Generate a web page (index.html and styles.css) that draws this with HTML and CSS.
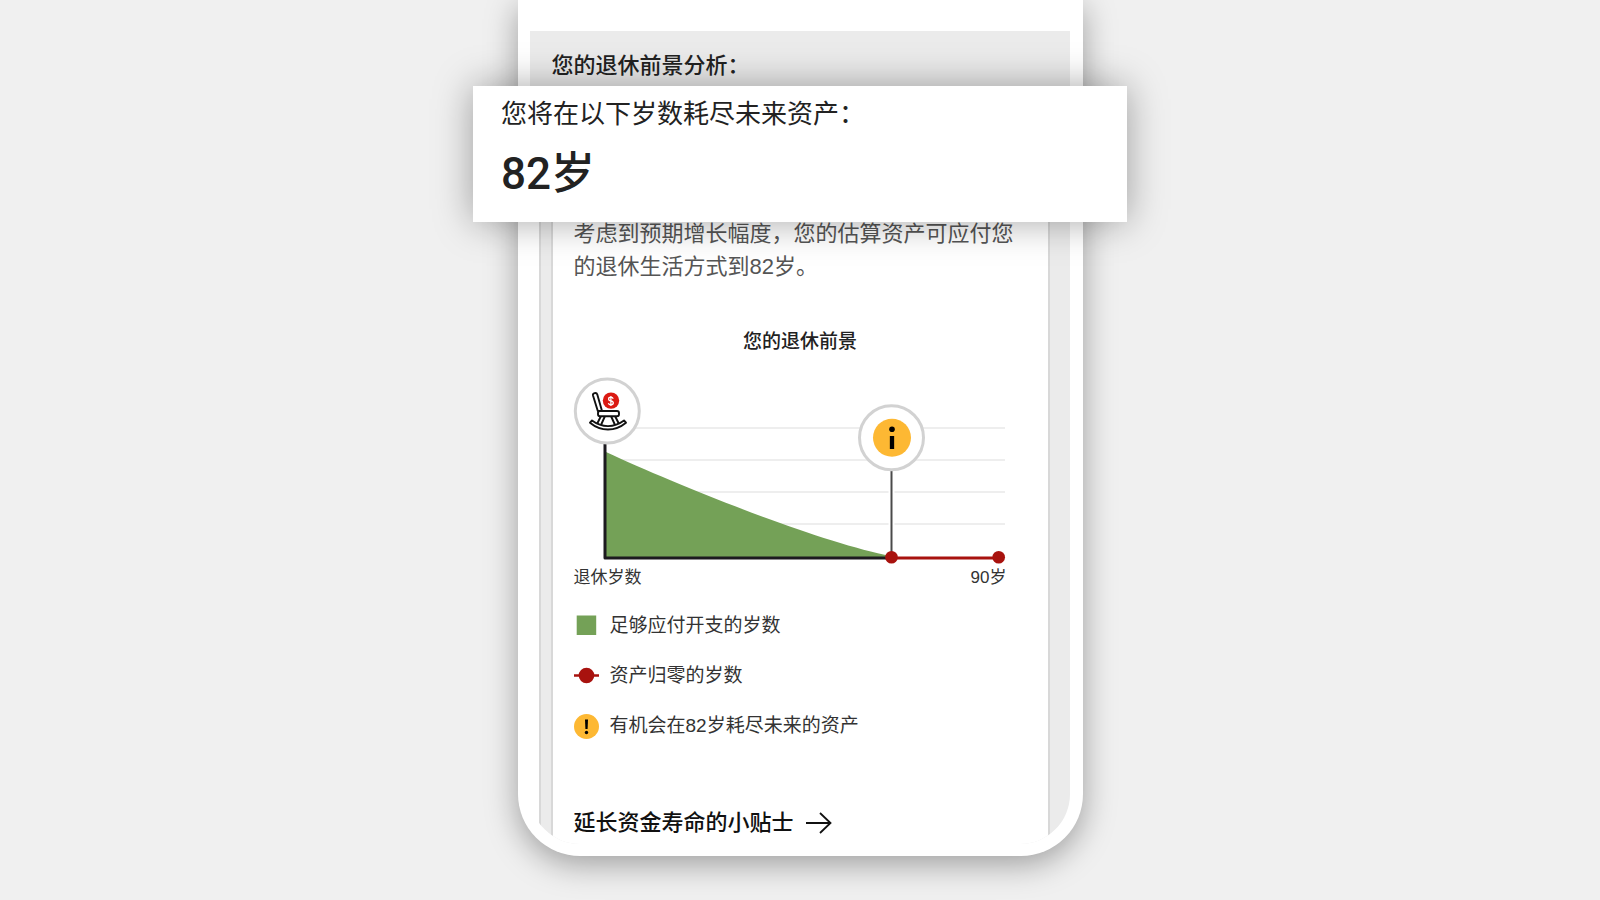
FILE: index.html
```
<!DOCTYPE html>
<html lang="zh-CN">
<head>
    <meta charset="UTF-8">
    <meta name="viewport" content="width=device-width, initial-scale=1.0">
    <title>您的退休前景</title>
    <link rel="stylesheet" href="styles.css">
</head>
<body>
    <main class="phone">
        <div class="screen">
            <h1 class="screen-title">您的退休前景分析：</h1>

            <div class="panel">
                <div class="card">
                    <p class="summary">考虑到预期增长幅度，您的估算资产可应付您的退休生活方式到82岁。</p>

                    <h2 class="chart-title">您的退休前景</h2>
                    <svg class="chart" viewBox="0 0 453 198" role="img" aria-label="您的退休前景">
                        <g stroke="#eeeeee" stroke-width="2">
                            <path d="M33 58H431M33 90H431M33 122H431M33 154H431"/>
                        </g>
                        <path d="M32 82C110 118 245 172 317 186V188H32Z" fill="#74a157"/>
                        <path d="M31 70V188H317" fill="none" stroke="#1c1a1f" stroke-width="3" stroke-linejoin="round"/>
                        <path d="M317.500 98V187" stroke="#fff" stroke-width="6"/>
                        <path d="M317.500 98V187" stroke="#4a4a4a" stroke-width="2"/>
                        <path d="M317 188H425" stroke="#a8120e" stroke-width="3"/>
                        <circle cx="317.500" cy="187.300" r="6.300" fill="#a8120e"/>
                        <circle cx="424.700" cy="187.300" r="6.300" fill="#a8120e"/>

                        <!-- rocking chair -->
                        <circle cx="33.300" cy="41" r="32" fill="#fff" stroke="#d2d2d2" stroke-width="3"/>
                        <g fill="#fff" stroke="#111" stroke-width="1.900" stroke-linejoin="round" stroke-linecap="round">
                            <path d="M27 46l-4 8M31 46l-4 9M37 46l4 9M41 46l4 8" fill="none"/>
                            <path d="M19 25.500c-.6-2.600 3.500-3.600 4.300-1L28 41h-4.200Z"/>
                            <rect x="24" y="41" width="21" height="5.200" rx="2"/>
                            <path d="M18 50.500c10 7.500 22 7.500 32 0l2 2.200c-11 9-25 9-36 0Z"/>
                        </g>
                        <circle cx="37" cy="30.600" r="8.200" fill="#db1a12"/>
                        <path d="M39.200 28.700c-.4-1-1.200-1.500-2.300-1.500-3 0-3 3.300 0 3.700 3.200.5 3.200 4 0 4-1.300 0-2.200-.6-2.500-1.700M36.900 26v10" fill="none" stroke="#fff" stroke-width="1.300"/>

                        <!-- info marker -->
                        <circle cx="317.500" cy="67.700" r="32" fill="#fff" stroke="#d2d2d2" stroke-width="3"/>
                        <circle cx="318" cy="67.700" r="19" fill="#fdb833"/>
                        <circle cx="318" cy="59.300" r="2.800" fill="#000"/>
                        <path d="M318 66V79" stroke="#000" stroke-width="4.300"/>
                    </svg>
                    <div class="axis-labels">
                        <span>退休岁数</span>
                        <span>90岁</span>
                    </div>

                    <ul class="legend">
                        <li>
                            <svg class="legend-icon" viewBox="0 0 25 25" aria-hidden="true">
                                <rect x="2.700" y="1.500" width="19.500" height="19.500" fill="#74a157"/>
                            </svg>
                            足够应付开支的岁数
                        </li>
                        <li>
                            <svg class="legend-icon" viewBox="0 0 25 25" aria-hidden="true">
                                <path d="M0 11.500H25" stroke="#a8120e" stroke-width="2.500"/>
                                <circle cx="12.500" cy="11.500" r="7.800" fill="#a8120e"/>
                            </svg>
                            资产归零的岁数
                        </li>
                        <li>
                            <svg class="legend-icon" viewBox="0 0 25 25" aria-hidden="true">
                                <circle cx="12.500" cy="12.500" r="12.500" fill="#fdb833"/>
                                <path d="M11 5.500H14L13.600 15H11.400Z"/>
                                <circle cx="12.500" cy="18.500" r="1.700"/>
                            </svg>
                            有机会在82岁耗尽未来的资产
                        </li>
                    </ul>

                    <a class="tips-link" href="#">
                        延长资金寿命的小贴士
                        <svg class="arrow" viewBox="0 0 26 22" aria-hidden="true">
                            <path d="M0 11H24M14 1L24.500 11L14 21" fill="none" stroke="#111" stroke-width="1.800"/>
                        </svg>
                    </a>
                </div>
            </div>
        </div>
    </main>

    <section class="callout">
        <h2 class="callout-title">您将在以下岁数耗尽未来资产：</h2>
        <p class="callout-age">82岁</p>
    </section>
</body>
</html>
```
FILE: styles.css
```
* {
    box-sizing: border-box;
}
body {
    margin: 0;
    min-height: 100vh;
    background: #f0f0f0;
    color: #222;
    font-family: "Liberation Sans", "Noto Sans CJK SC", sans-serif;
    position: relative;
    overflow-x: hidden;
}
h1, h2, p, ul {
    margin: 0;
    padding: 0;
    font-weight: 400;
}
.phone {
    width: 100%;
    max-width: 565px;
    margin: 0 auto;
    padding: 31px 13px 12px 12px;
    background: #fff;
    border-radius: 0 0 62px 62px;
    box-shadow: 0 8px 32px rgba(0,0,0,0.35);
}
.screen {
    overflow: hidden;
    border-radius: 0 0 50px 50px;
}
.screen-title {
    padding: 18px 22px 49px;
    background: #ebebeb;
    font-size: 22px;
    font-weight: 500;
    line-height: 33px;
}
.panel {
    margin-left: 9px;
    padding: 0 20px 0 10px;
    background: #ebebeb;
    border-left: 2px solid #d8d8d8;
}
.card {
    padding: 86px 21px 5px;
    background: #fff;
    border: solid #d8d8d8;
    border-width: 0 2px;
}
.summary {
    color: #555;
    font-size: 22px;
    line-height: 33px;
}
.chart-title {
    margin: 43px 0 12px;
    font-size: 19px;
    font-weight: 500;
    line-height: 32px;
    text-align: center;
}
.chart {
    display: block;
    width: 100%;
    overflow: visible;
}
.axis-labels {
    display: flex;
    justify-content: space-between;
    padding-right: 20px;
    color: #333;
    font-size: 17px;
    line-height: 20px;
}
.legend {
    margin-top: 13px;
    color: #333;
    list-style: none;
    font-size: 19px;
    line-height: 50px;
}
.legend li {
    display: flex;
    align-items: center;
    gap: 11px;
}
.legend-icon {
    width: 25px;
    height: 25px;
}
.tips-link {
    display: inline-flex;
    align-items: center;
    gap: 12px;
    margin-top: 55px;
    color: #111;
    font-size: 22px;
    font-weight: 500;
    line-height: 33px;
    text-decoration: none;
}
.arrow {
    width: 26px;
    height: 22px;
}
/* enlarged result lying over the phone */
.callout {
    position: absolute;
    top: 86px;
    left: 0;
    right: 0;
    max-width: 654px;
    margin: 0 auto;
    padding: 8px 28px 16px;
    background: #fff;
    box-shadow: 0 0 36px rgba(0,0,0,0.35);
}
.callout-title {
    font-size: 26px;
    line-height: 40px;
}
.callout-age {
    margin-top: 8px;
    font-family: Roboto, "Noto Sans CJK SC", sans-serif;
    font-size: 44px;
    font-weight: 500;
    line-height: 64px;
}
```
